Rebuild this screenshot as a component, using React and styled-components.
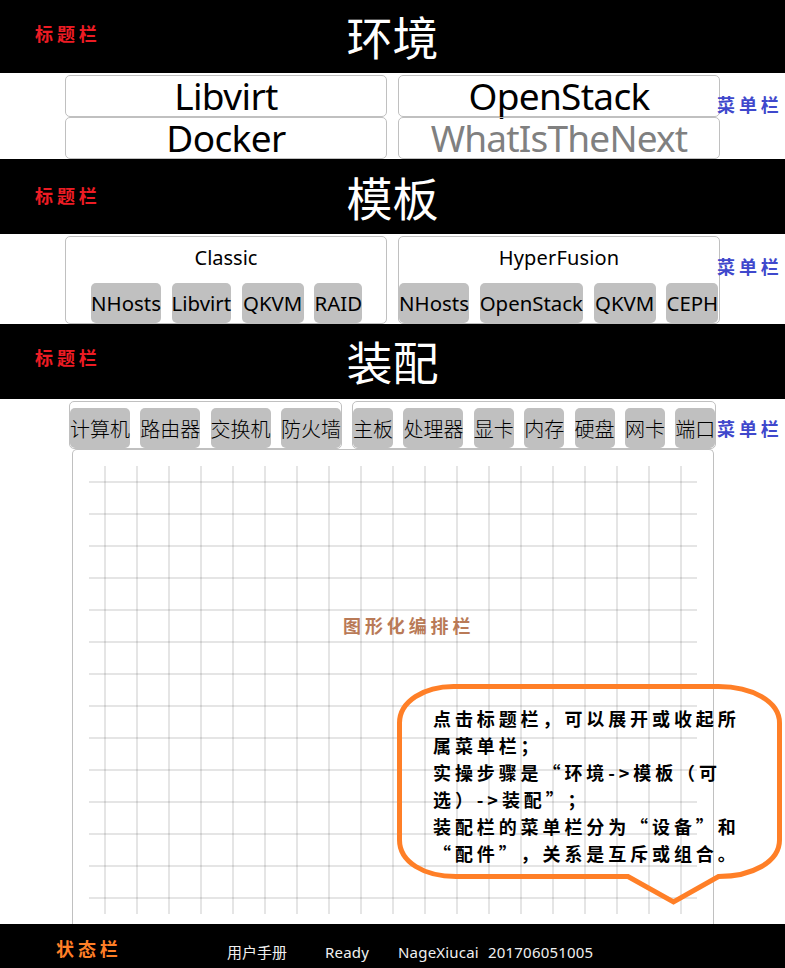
import React from "react";
import styled, { createGlobalStyle } from "styled-components";

const Global = createGlobalStyle`
  * { box-sizing: border-box; }
  body { margin: 0; background: #fff; color: #000; font-family: "Noto Sans", "Noto Sans CJK SC", sans-serif; }
`;

const Page = styled.main`
  position: relative;
  width: 785px;
  height: 968px;
  overflow: hidden;
  display: flex;
  flex-direction: column;
`;

const TitleBar = styled.header`
  position: relative;
  flex: none;
  height: ${(p) => p.$height}px;
  background: #000;
  color: #fff;
  display: flex;
  justify-content: center;
`;

const Title = styled.h1`
  margin: 0;
  padding-top: ${(p) => p.$top}px;
  font: 400 46px/60px "Noto Sans CJK SC", sans-serif;
`;

const Note = styled.span`
  position: absolute;
  z-index: 2;
  left: ${(p) => p.$left}px;
  top: ${(p) => p.$top}px;
  color: ${(p) => p.$color};
  font: 700 18px/24px "Noto Sans CJK SC", sans-serif;
  letter-spacing: 3.9px;
  white-space: nowrap;
`;

const Menu = styled.section`
  position: relative;
  flex: none;
  height: ${(p) => p.$height}px;
  padding-top: 2px;
`;

const EnvGrid = styled.div`
  display: grid;
  grid-template-columns: 322px 322px;
  grid-auto-rows: 42px;
  column-gap: 11px;
  padding-left: 65px;
`;

const Box = styled.div`
  border: 1px solid #c0c0c0;
  border-radius: 5px;
`;

const EnvButton = styled(Box)`
  display: flex;
  align-items: center;
  justify-content: center;
  font-size: 37px;
  line-height: 40px;
  letter-spacing: ${(p) => p.$spacing}px;
  color: ${(p) => (p.$muted ? "#808080" : "#000")};
  white-space: nowrap;
`;

const Templates = styled.div`
  display: grid;
  grid-template-columns: 322px 322px;
  grid-auto-rows: 88px;
  column-gap: 11px;
  padding-left: 65px;
`;

const Template = styled(Box)`
  display: flex;
  flex-direction: column;
`;

const TemplateName = styled.div`
  height: 46px;
  padding-top: 7px;
  font-size: 20px;
  line-height: 28px;
  letter-spacing: ${(p) => p.$spacing}px;
  text-align: center;
`;

const ChipRow = styled.div`
  display: flex;
  gap: ${(p) => p.$gap}px;
  padding-left: ${(p) => p.$left}px;
`;

const Chip = styled.div`
  flex: none;
  width: ${(p) => p.$width}px;
  height: 40px;
  border-radius: 5px;
  background: #c0c0c0;
  display: flex;
  align-items: center;
  justify-content: center;
  font-size: ${(p) => (p.$cjk ? 20 : 20.4)}px;
  font-weight: ${(p) => (p.$cjk ? 300 : 400)};
  white-space: nowrap;
`;

const Groups = styled.div`
  display: flex;
  gap: 10px;
  padding-left: 69px;
`;

const Group = styled(Box)`
  width: ${(p) => p.$width}px;
  height: 48px;
  padding-top: 6px;
`;

const Canvas = styled(Box)`
  width: 642px;
  height: 475px;
  margin-left: 72px;
  padding: 16px;
  border-bottom: 0;
  border-radius: 5px 5px 0 0;
`;

const GridLines = styled.div`
  width: 608px;
  height: 448px;
  background:
    linear-gradient(90deg, transparent 15px, rgba(0, 0, 0, 0.1) 15px 17px, transparent 17px) 0 0 / 32px 32px,
    linear-gradient(transparent 15px, rgba(0, 0, 0, 0.1) 15px 17px, transparent 17px) 0 0 / 32px 32px;
`;

const StatusBar = styled.footer`
  position: relative;
  flex: none;
  height: 44px;
  padding: 14px 0 0 227px;
  background: #000;
  color: #f0f0f0;
  display: flex;
  font-size: 15px;
  line-height: 28px;
  white-space: pre;
`;

const StatusItem = styled.span`
  width: ${(p) => p.$width}px;
  letter-spacing: ${(p) => p.$spacing || 0}px;
`;

const Balloon = styled.aside`
  position: absolute;
  z-index: 3;
  left: 397px;
  top: 684px;
  width: 385px;
  height: 222px;
  padding: 21px 0 0 36px;
`;

const Outline = styled.svg`
  position: absolute;
  inset: 0;
`;

const BalloonLine = styled.div`
  position: relative;
  font: 700 18px/27px "Noto Sans CJK SC", sans-serif;
  letter-spacing: 3.9px;
  text-spacing-trim: space-all;
  font-kerning: none;
  white-space: nowrap;
`;

const classic = [["NHosts", 70], ["Libvirt", 59.5], ["QKVM", 62], ["RAID", 48]];
const fusion = [["NHosts", 70], ["OpenStack", 103], ["QKVM", 62], ["CEPH", 52]];
const devices = ["计算机", "路由器", "交换机", "防火墙"];
const parts = ["主板", "处理器", "显卡", "内存", "硬盘", "网卡", "端口"];
const help = [
  "点击标题栏，可以展开或收起所",
  "属菜单栏；",
  "实操步骤是“环境->模板（可",
  "选）->装配”；",
  "装配栏的菜单栏分为“设备”和",
  "“配件”，关系是互斥或组合。",
];

function Heading({ text, height, top, noteTop }) {
  return (
    <TitleBar $height={height}>
      <Note $left={35} $top={noteTop} $color="#ed1c24">标题栏</Note>
      <Title $top={top}>{text}</Title>
    </TitleBar>
  );
}

const MenuNote = ({ top }) => (
  <Note $left={717} $top={top} $color="#3f48cc">菜单栏</Note>
);

export default function App() {
  return (
    <Page lang="zh-CN">
      <Global />
      <Heading text="环境" height={73} top={5} noteTop={21} />
      <Menu $height={86}>
        <EnvGrid>
          <EnvButton $spacing={-0.6}>Libvirt</EnvButton>
          <EnvButton $spacing={-0.7}>OpenStack</EnvButton>
          <EnvButton $spacing={-0.6}>Docker</EnvButton>
          <EnvButton $spacing={-0.8} $muted>WhatIsTheNext</EnvButton>
        </EnvGrid>
        <MenuNote top={19} />
      </Menu>

      <Heading text="模板" height={75} top={7} noteTop={24} />
      <Menu $height={90}>
        <Templates>
          <Template>
            <TemplateName $spacing={0}>Classic</TemplateName>
            <ChipRow $left={25} $gap={10.6}>
              {classic.map(([name, width]) => <Chip key={name} $width={width}>{name}</Chip>)}
            </ChipRow>
          </Template>
          <Template>
            <TemplateName $spacing={0.15}>HyperFusion</TemplateName>
            <ChipRow $left={0} $gap={10.8}>
              {fusion.map(([name, width]) => <Chip key={name} $width={width}>{name}</Chip>)}
            </ChipRow>
          </Template>
        </Templates>
        <MenuNote top={20} />
      </Menu>

      <Heading text="装配" height={75} top={6} noteTop={21} />
      <Menu $height={525}>
        <Groups>
          <Group $width={273}>
            <ChipRow $left={0} $gap={10.3}>
              {devices.map((name) => <Chip key={name} $cjk $width={60}>{name}</Chip>)}
            </ChipRow>
          </Group>
          <Group $width={364}>
            <ChipRow $left={0} $gap={10.4}>
              {parts.map((name) => <Chip key={name} $cjk $width={name.length * 20}>{name}</Chip>)}
            </ChipRow>
          </Group>
        </Groups>
        <Canvas>
          <GridLines />
        </Canvas>
        <MenuNote top={17} />
        <Note $left={343} $top={214} $color="#b97a57">图形化编排栏</Note>
      </Menu>

      <StatusBar>
        <Note $left={56} $top={12} $color="#ff7f27">状态栏</Note>
        <StatusItem $width={98}>用户手册</StatusItem>
        <StatusItem $width={73} $spacing={0.2}>Ready</StatusItem>
        <StatusItem $width={90} $spacing={0.2}>NageXiucai</StatusItem>
        <StatusItem $width={110} $spacing={0.2}>201706051005</StatusItem>
      </StatusBar>

      <Balloon>
        <Outline width="385" height="222" viewBox="0 0 385 222" fill="none" stroke="#ff7f27" strokeWidth="5">
          <path d="M56.5 2.5H321.5C355 2.5 382.5 17.5 382.5 39V156C382.5 178 355 192.5 321.5 192.5L276.5 218L231 192.5H59C27 192.5 2.5 178 2.5 156V39C2.5 17.5 27 2.5 56.5 2.5Z" />
        </Outline>
        {help.map((line) => <BalloonLine key={line}>{line}</BalloonLine>)}
      </Balloon>
    </Page>
  );
}
